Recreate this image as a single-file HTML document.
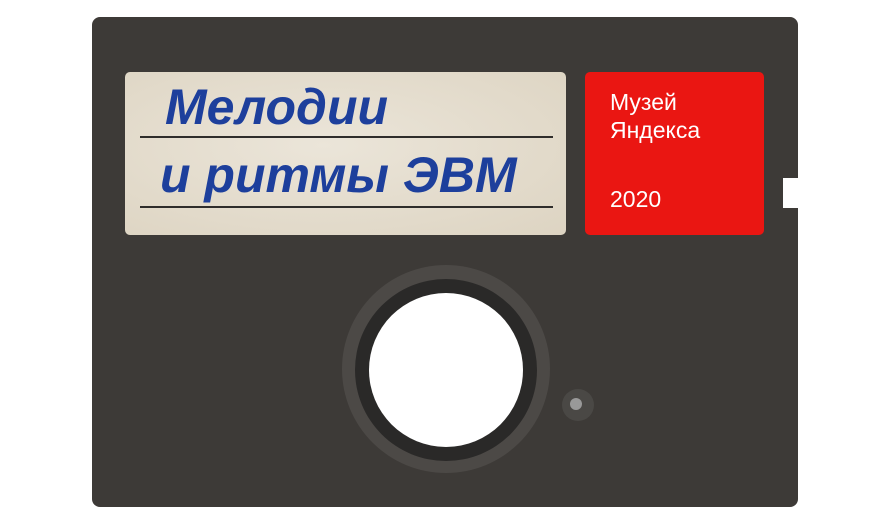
<!DOCTYPE html>
<html><head><meta charset="utf-8"><style>
*{margin:0;padding:0}
body{width:888px;height:492px;background:#fff;position:relative;overflow:hidden;font-family:"Liberation Sans",sans-serif}
.disk{position:absolute;left:92px;top:17px;width:706px;height:490px;background:#3d3a37;border-radius:8px}
.notch{position:absolute;left:783px;top:178px;width:16px;height:30px;background:#fff}
.label{position:absolute;left:125px;top:72px;width:441px;height:163px;background:radial-gradient(ellipse at 45% 45%,#ebe5d9,#ddd4c2);border-radius:5px}
.line{position:absolute;left:15px;width:413px;height:2px;background:#2f2d2b}
.hw{position:absolute;color:#1d3f9c;font-style:italic;font-weight:bold;font-size:54px;white-space:nowrap}
.red{position:absolute;left:585px;top:72px;width:179px;height:163px;background:#ea1612;border-radius:5px;color:#fff}
.red div{position:absolute;left:25px;font-size:23px;line-height:28px}
.c{position:absolute;border-radius:50%}
</style></head><body>
<div class="disk"></div>
<div class="notch"></div>
<div class="label">
  <div class="line" style="top:64px"></div>
  <div class="line" style="top:134px"></div>
  <div class="hw" style="left:40px;top:6px;font-size:50px">Мелодии</div>
  <div class="hw" style="left:35px;top:74px;font-size:50px">и ритмы ЭВМ</div>
</div>
<div class="red">
  <div style="top:16px">Музей<br>Яндекса</div>
  <div style="top:113px">2020</div>
</div>
<div class="c" style="left:342px;top:265px;width:208px;height:208px;background:#4c4946"></div>
<div class="c" style="left:355px;top:279px;width:182px;height:182px;background:#2a2928"></div>
<div class="c" style="left:369px;top:293px;width:154px;height:154px;background:#fff"></div>
<div class="c" style="left:562px;top:389px;width:32px;height:32px;background:#4a4845"></div>
<div class="c" style="left:570px;top:398px;width:12px;height:12px;background:#999"></div>
</body></html>
